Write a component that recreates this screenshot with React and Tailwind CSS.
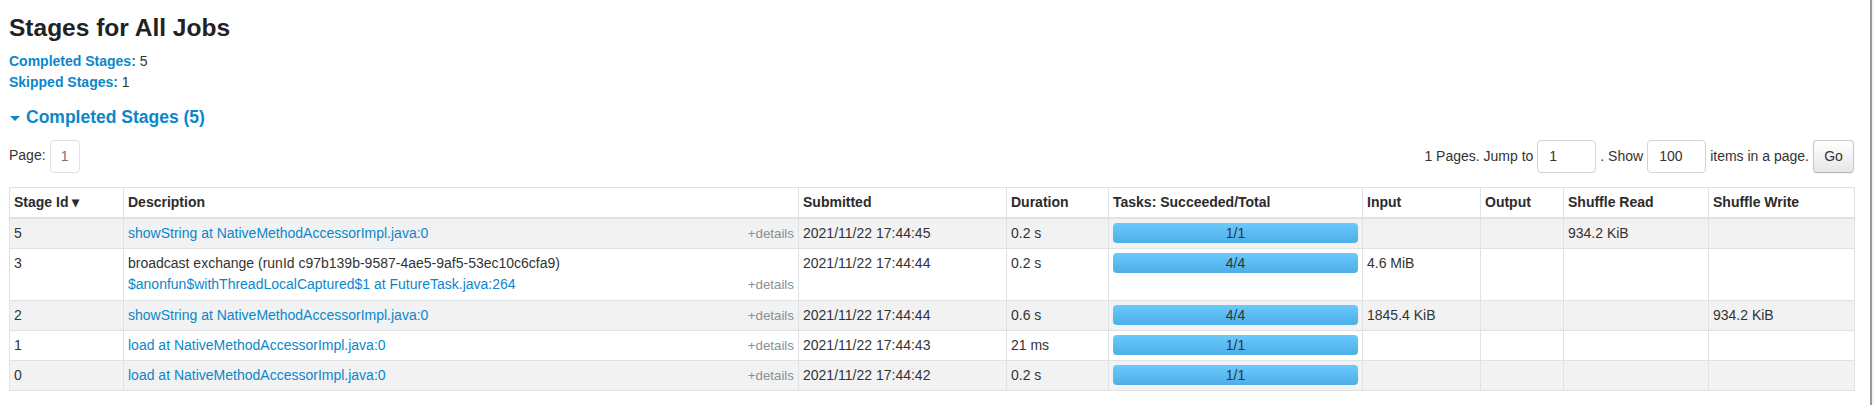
import React from 'react';

const stages = [
  {
    id: 5,
    link: 'showString at NativeMethodAccessorImpl.java:0',
    submitted: '2021/11/22 17:44:45',
    duration: '0.2 s',
    tasks: '1/1',
    input: '',
    output: '',
    shuffleRead: '934.2 KiB',
    shuffleWrite: '',
  },
  {
    id: 3,
    desc: 'broadcast exchange (runId c97b139b-9587-4ae5-9af5-53ec10c6cfa9)',
    link: '$anonfun$withThreadLocalCaptured$1 at FutureTask.java:264',
    submitted: '2021/11/22 17:44:44',
    duration: '0.2 s',
    tasks: '4/4',
    input: '4.6 MiB',
    output: '',
    shuffleRead: '',
    shuffleWrite: '',
  },
  {
    id: 2,
    link: 'showString at NativeMethodAccessorImpl.java:0',
    submitted: '2021/11/22 17:44:44',
    duration: '0.6 s',
    tasks: '4/4',
    input: '1845.4 KiB',
    output: '',
    shuffleRead: '',
    shuffleWrite: '934.2 KiB',
  },
  {
    id: 1,
    link: 'load at NativeMethodAccessorImpl.java:0',
    submitted: '2021/11/22 17:44:43',
    duration: '21 ms',
    tasks: '1/1',
    input: '',
    output: '',
    shuffleRead: '',
    shuffleWrite: '',
  },
  {
    id: 0,
    link: 'load at NativeMethodAccessorImpl.java:0',
    submitted: '2021/11/22 17:44:42',
    duration: '0.2 s',
    tasks: '1/1',
    input: '',
    output: '',
    shuffleRead: '',
    shuffleWrite: '',
  },
];

const columns = [
  { title: 'Stage Id \u25BE', width: 114 },
  { title: 'Description', width: 675 },
  { title: 'Submitted', width: 208 },
  { title: 'Duration', width: 102 },
  { title: 'Tasks: Succeeded/Total', width: 254 },
  { title: 'Input', width: 118 },
  { title: 'Output', width: 83 },
  { title: 'Shuffle Read', width: 145 },
  { title: 'Shuffle Write', width: 146 },
];

const cell = 'border border-[#dee2e6] px-[4px] py-[4px] align-top text-left';

const Details = () => (
  <span className="float-right text-[13.33px] text-[#8a8f94]">+details</span>
);

const TaskBar = ({ label }) => (
  <div className="h-[20px] rounded-[4px] bg-linear-to-b from-[#69cafd] to-[#4daee9] text-center leading-[20px] text-[#333]">
    {label}
  </div>
);

const App = () => {
  return (
    <div
      className="flex w-[1874px] h-[405px] overflow-hidden bg-white text-[#333] text-[14px] leading-[21px]"
      style={{ fontFamily: '"Liberation Sans", Arial, Helvetica, sans-serif' }}
    >
      <div className="w-[1870px] pl-[9px] pt-[14px]">
        {/* Header */}
        <h3 className="text-[24.5px] leading-[28px] font-bold text-[#222]">Stages for All Jobs</h3>

        <ul className="mt-[9px]">
          <li>
            <a className="font-bold text-[#0a87cc]">Completed Stages:</a> 5
          </li>
          <li>
            <a className="font-bold text-[#0a87cc]">Skipped Stages:</a> 1
          </li>
        </ul>

        <h4 className="mt-[14px] flex items-center text-[17.5px] leading-[21px] font-bold text-[#0a87cc]">
          <span className="mr-[6px] ml-[1px] mt-[1px] inline-block w-0 h-0 border-x-[5px] border-t-[5px] border-x-transparent border-t-[#0a87cc]" />
          Completed Stages (5)
        </h4>

        {/* Pagination */}
        <div className="mt-[12px] flex w-[1845px] items-center justify-between">
          <div className="flex items-center gap-[4px]">
            <span className="pb-[3px]">Page:</span>
            <span className="flex h-[33px] w-[30px] items-center justify-center rounded-[4px] border border-[#dee2e6] text-[#7a7474]">
              1
            </span>
          </div>
          <div className="flex items-center gap-[4px]">
            <span>1 Pages. Jump to</span>
            <div className="flex h-[33px] w-[59px] items-center rounded-[4px] border border-[#d3d3d3] pl-[11px]">1</div>
            <span>. Show</span>
            <div className="flex h-[33px] w-[59px] items-center rounded-[4px] border border-[#d3d3d3] pl-[11px]">100</div>
            <span>items in a page.</span>
            <button className="h-[33px] w-[41px] rounded-[4px] border border-[#c8c8c8] border-b-[#b3b3b3] bg-linear-to-b from-white to-[#e6e6e6] text-[#333] shadow-[inset_0_1px_0_rgba(255,255,255,0.2),0_1px_2px_rgba(0,0,0,0.05)]">
              Go
            </button>
          </div>
        </div>

        {/* Table */}
        <table className="mt-[14px] w-[1845px] table-fixed border-collapse">
          <colgroup>
            {columns.map(c => (
              <col key={c.title} style={{ width: c.width }} />
            ))}
          </colgroup>
          <thead>
            <tr>
              {columns.map(c => (
                <th key={c.title} className={`${cell} border-b-2 font-bold text-[#2b2b2b]`}>
                  {c.title}
                </th>
              ))}
            </tr>
          </thead>
          <tbody>
            {stages.map((s, i) => (
              <tr key={s.id} className={i % 2 === 0 ? 'bg-[#f2f2f2]' : 'bg-white'}>
                <td className={cell}>{s.id}</td>
                <td className={cell}>
                  {s.desc && <div>{s.desc}</div>}
                  <div className={s.desc ? 'pb-[1px]' : ''}>
                    <Details />
                    <a className="text-[#0a87cc]">{s.link}</a>
                  </div>
                </td>
                <td className={cell}>{s.submitted}</td>
                <td className={cell}>{s.duration}</td>
                <td className={cell}>
                  <TaskBar label={s.tasks} />
                </td>
                <td className={cell}>{s.input}</td>
                <td className={cell}>{s.output}</td>
                <td className={cell}>{s.shuffleRead}</td>
                <td className={cell}>{s.shuffleWrite}</td>
              </tr>
            ))}
          </tbody>
        </table>
      </div>
      <div className="w-[4px] border-l-2 border-[#9a9a9a] bg-[#f3f3f3]" />
    </div>
  );
};

export default App;
